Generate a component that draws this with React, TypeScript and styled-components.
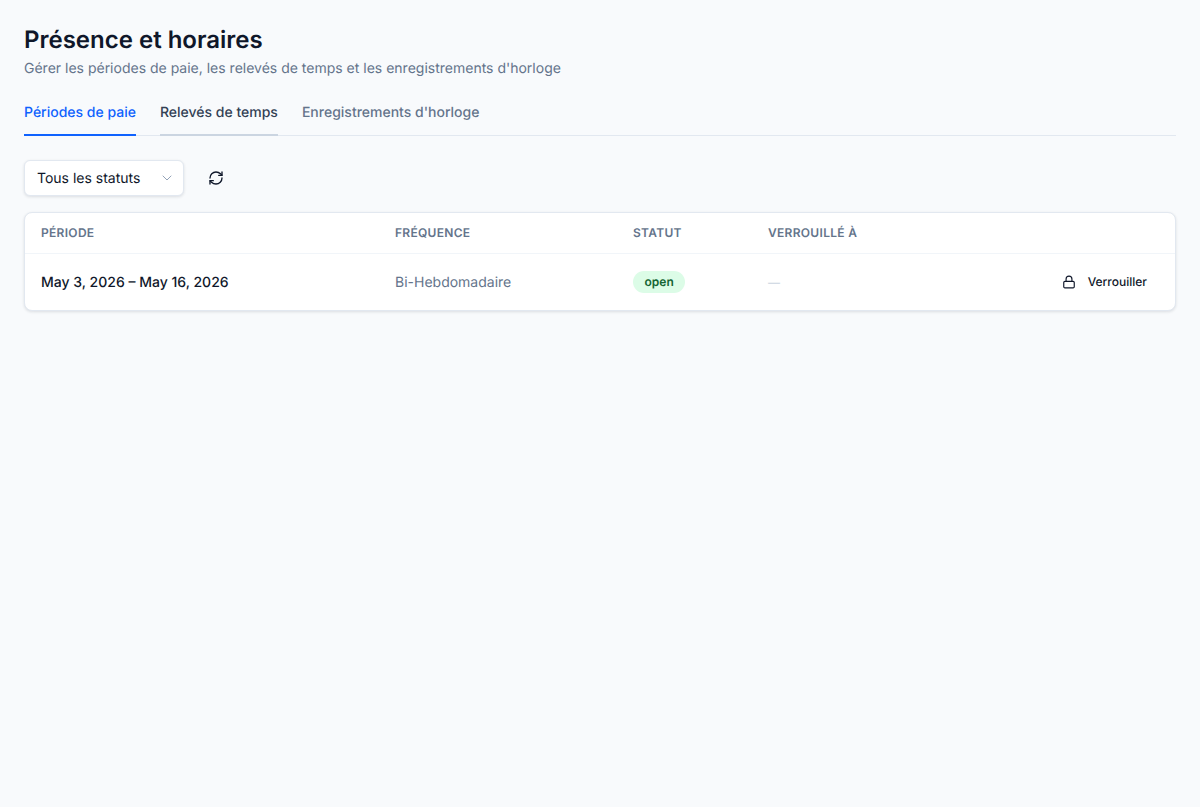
import styled, { createGlobalStyle } from "styled-components";
import { ChevronDown, Lock, RefreshCw } from "lucide-react";

const GlobalStyle = createGlobalStyle`
  html, body {
    margin: 0;
    padding: 0;
    background: #f8fafc;
  }

  body {
    font-family: Inter, "Liberation Sans", sans-serif;
    color: #0f172a;
    text-rendering: geometricPrecision;
  }
`;

const Page = styled.div`
  min-height: 807px;
  box-sizing: border-box;
  padding: 24px;
  background: #f8fafc;
`;

const Title = styled.h1`
  margin: 0;
  font-size: 24px;
  line-height: 32px;
  font-weight: 600;
  color: #0f172a;
`;

const Subtitle = styled.p`
  margin: 3px 0 0;
  font-size: 14px;
  line-height: 20px;
  color: #64748b;
`;

const Tabs = styled.div`
  display: flex;
  gap: 24px;
  margin-top: 17px;
  border-bottom: 1px solid #e2e8f0;
`;

const Tab = styled.div<{ $active?: boolean; $hover?: boolean }>`
  height: 40px;
  box-sizing: border-box;
  padding-top: 7px;
  margin-bottom: -1px;
  font-size: 14px;
  line-height: 20px;
  font-weight: 500;
  color: ${(props) => (props.$active ? "#0f62fe" : props.$hover ? "#334155" : "#64748b")};
  border-bottom: 2px solid ${(props) => (props.$active ? "#0f62fe" : props.$hover ? "#cbd5e1" : "transparent")};
`;

const Toolbar = styled.div`
  display: flex;
  align-items: center;
  gap: 16px;
  margin-top: 24px;
`;

const Select = styled.div`
  width: 160px;
  height: 36px;
  box-sizing: border-box;
  display: flex;
  align-items: center;
  justify-content: space-between;
  padding: 0 8px 0 12px;
  background: #ffffff;
  border: 1px solid #e2e8f0;
  border-radius: 6px;
  box-shadow: 0 1px 3px rgba(15, 23, 42, 0.12);
  font-size: 14px;
  color: #0f172a;
`;

const IconButton = styled.div`
  width: 32px;
  height: 32px;
  display: flex;
  align-items: center;
  justify-content: center;
  color: #0f172a;
`;

const Card = styled.div`
  margin-top: 16px;
  background: #ffffff;
  border: 1px solid #e2e8f0;
  border-radius: 8px;
  box-shadow: 0 1px 3px rgba(15, 23, 42, 0.12);
  overflow: hidden;
`;

const Row = styled.div<{ $head?: boolean }>`
  display: grid;
  grid-template-columns: 354px 238px 135px 1fr auto;
  align-items: center;
  height: ${(props) => (props.$head ? "40px" : "56px")};
  padding: 0 28px 0 16px;
  border-bottom: ${(props) => (props.$head ? "1px solid #f1f5f9" : "none")};
`;

const HeadCell = styled.div`
  font-size: 12px;
  line-height: 16px;
  font-weight: 600;
  letter-spacing: 0.3px;
  text-transform: uppercase;
  color: #64748b;
`;

const PeriodCell = styled.div`
  font-size: 14px;
  font-weight: 500;
  color: #0f172a;
`;

const MutedCell = styled.div`
  font-size: 14px;
  color: #64748b;
`;

const EmptyCell = styled.div`
  font-size: 12px;
  color: #cbd5e1;
`;

const StatusCell = styled.div`
  display: flex;
`;

const Badge = styled.span`
  display: inline-flex;
  align-items: center;
  height: 22px;
  box-sizing: border-box;
  padding: 0 11.5px 1px;
  border-radius: 999px;
  background: #dcfce7;
  color: #166534;
  font-size: 12px;
  font-weight: 600;
`;

const LockButton = styled.div`
  display: flex;
  align-items: center;
  gap: 12px;
  font-size: 12px;
  font-weight: 500;
  color: #0f172a;
`;

const LockLabel = styled.span`
  padding-bottom: 1px;
`;

export default function App() {
  return (
    <>
      <GlobalStyle />
      <Page>
        <Title>Présence et horaires</Title>
        <Subtitle>Gérer les périodes de paie, les relevés de temps et les enregistrements d'horloge</Subtitle>
        <Tabs>
          <Tab $active>Périodes de paie</Tab>
          <Tab $hover>Relevés de temps</Tab>
          <Tab>Enregistrements d'horloge</Tab>
        </Tabs>
        <Toolbar>
          <Select>
            Tous les statuts
            <ChevronDown size={16} color="#94a3b8" strokeWidth={1.5} />
          </Select>
          <IconButton>
            <RefreshCw size={16} strokeWidth={2} />
          </IconButton>
        </Toolbar>
        <Card>
          <Row $head>
            <HeadCell>Période</HeadCell>
            <HeadCell>Fréquence</HeadCell>
            <HeadCell>Statut</HeadCell>
            <HeadCell>Verrouillé à</HeadCell>
            <div />
          </Row>
          <Row>
            <PeriodCell>May 3, 2026 – May 16, 2026</PeriodCell>
            <MutedCell>Bi-Hebdomadaire</MutedCell>
            <StatusCell>
              <Badge>open</Badge>
            </StatusCell>
            <EmptyCell>—</EmptyCell>
            <LockButton>
              <Lock size={14} strokeWidth={2} />
              <LockLabel>Verrouiller</LockLabel>
            </LockButton>
          </Row>
        </Card>
      </Page>
    </>
  );
}
